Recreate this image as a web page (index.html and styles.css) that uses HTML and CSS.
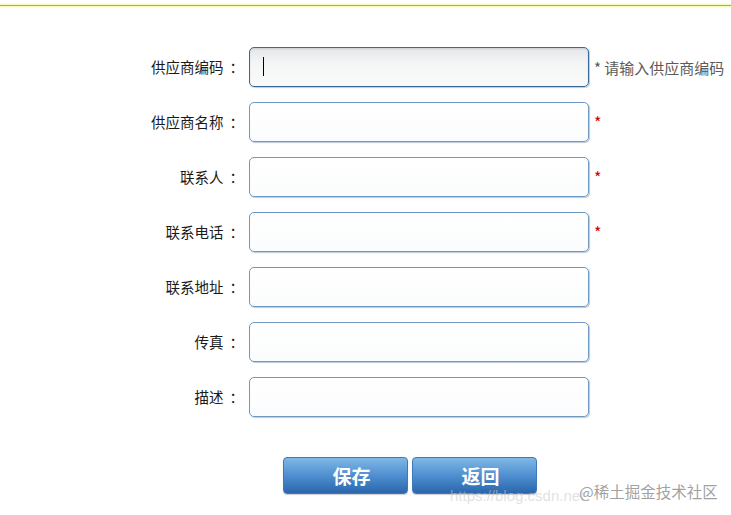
FILE: index.html
```html
<!DOCTYPE html>
<html lang="zh">
<head>
<meta charset="utf-8">
<title>供应商</title>
<link rel="stylesheet" href="styles.css">
</head>
<body>
<div class="topline"></div>
<form class="form">
  <div class="row">
    <label class="label">供应商编码<span class="colon">：</span></label>
    <div class="field focused"><input class="input" type="text"><span class="caret"></span></div>
    <span class="hint">* 请输入供应商编码</span>
  </div>
  <div class="row">
    <label class="label">供应商名称<span class="colon">：</span></label>
    <div class="field"><input class="input" type="text"></div>
    <span class="req">*</span>
  </div>
  <div class="row">
    <label class="label">联系人<span class="colon">：</span></label>
    <div class="field"><input class="input" type="text"></div>
    <span class="req">*</span>
  </div>
  <div class="row">
    <label class="label">联系电话<span class="colon">：</span></label>
    <div class="field"><input class="input" type="text"></div>
    <span class="req">*</span>
  </div>
  <div class="row">
    <label class="label">联系地址<span class="colon">：</span></label>
    <div class="field"><input class="input" type="text"></div>
  </div>
  <div class="row">
    <label class="label">传真<span class="colon">：</span></label>
    <div class="field"><input class="input" type="text"></div>
  </div>
  <div class="row">
    <label class="label">描述<span class="colon">：</span></label>
    <div class="field"><input class="input" type="text"></div>
  </div>
  <div class="actions">
    <button class="btn" type="button">保存</button>
    <button class="btn" type="button">返回</button>
  </div>
</form>
<div class="watermark"><span class="wm-url">https://blog.csdn.net</span><span class="wm-juejin">@稀土掘金技术社区</span></div>
</body>
</html>
```
FILE: styles.css
```css
html, body {
  margin: 0;
  padding: 0;
  background: #ffffff;
}
body {
  font-family: "Noto Sans CJK SC", "Liberation Sans", sans-serif;
  font-size: 14px;
  color: #222;
  position: relative;
  height: 515px;
  overflow: hidden;
}
.topline {
  margin-top: 5px;
  height: 0;
  border-top: 1px solid #a4b640;
  box-shadow: 0 0 2px 1px #f4f6a8;
}
.form {
  padding-top: 41px;
  display: flex;
  flex-direction: column;
  gap: 15px;
}
.row {
  display: grid;
  grid-template-columns: 238px 340px auto;
  column-gap: 11px;
  align-items: center;
  height: 40px;
}
.label {
  text-align: right;
  font-size: 14.5px;
  line-height: 20px;
  color: #1a1a1a;
}
.colon {
  margin-left: 6px;
  margin-right: -6px;
}
.field {
  position: relative;
  height: 40px;
}
.input {
  box-sizing: border-box;
  width: 340px;
  height: 40px;
  margin: 0;
  padding: 0 12px;
  border: 1px solid #6f98c2;
  border-radius: 5px;
  background: linear-gradient(#ffffff, #fbfcfd);
  box-shadow: 1px 1px 1px rgba(60, 100, 150, 0.35);
  outline: none;
  font-family: inherit;
  font-size: 14px;
}
.focused .input {
  border-color: #3a6a96;
  background: linear-gradient(#e4e6e9, #f4f5f6 40%, #fafafa);
  box-shadow: inset 0 1px 2px rgba(0, 0, 0, 0.12), 1px 1px 1px rgba(40, 80, 120, 0.3);
}
.caret {
  position: absolute;
  left: 14px;
  top: 10px;
  width: 1px;
  height: 19px;
  background: #000;
}
.hint {
  margin-left: -6px;
  font-size: 15px;
  color: #5a5a5a;
  white-space: nowrap;
}
.req {
  margin-left: -6px;
  margin-top: 0;
  color: #d40000;
  font-size: 16px;
}
.actions {
  display: flex;
  gap: 4px;
  padding-left: 283px;
  margin-top: 25px;
}
.btn {
  width: 125px;
  height: 37px;
  border: 1px solid #3e78b8;
  border-radius: 4px;
  background: linear-gradient(#80b8e6, #4f8fd0 50%, #2a66ad);
  color: #ffffff;
  font-family: "Noto Sans CJK SC", sans-serif;
  font-size: 19px;
  font-weight: bold;
  padding: 0 0 0 12px;
  box-shadow: 0 1px 1px rgba(0, 0, 0, 0.2);
}
.watermark {
  position: absolute;
  left: 450px;
  top: 480px;
  white-space: nowrap;
  font-family: "Liberation Sans", "Noto Sans CJK SC", sans-serif;
}
.wm-url {
  position: absolute;
  left: 0;
  top: 7px;
  font-size: 15px;
  color: rgba(200, 200, 200, 0.55);
}
.wm-juejin {
  position: absolute;
  left: 129px;
  top: 0;
  font-size: 15.5px;
  color: rgba(130, 130, 130, 0.75);
  font-family: "Noto Sans CJK SC", sans-serif;
}
```
